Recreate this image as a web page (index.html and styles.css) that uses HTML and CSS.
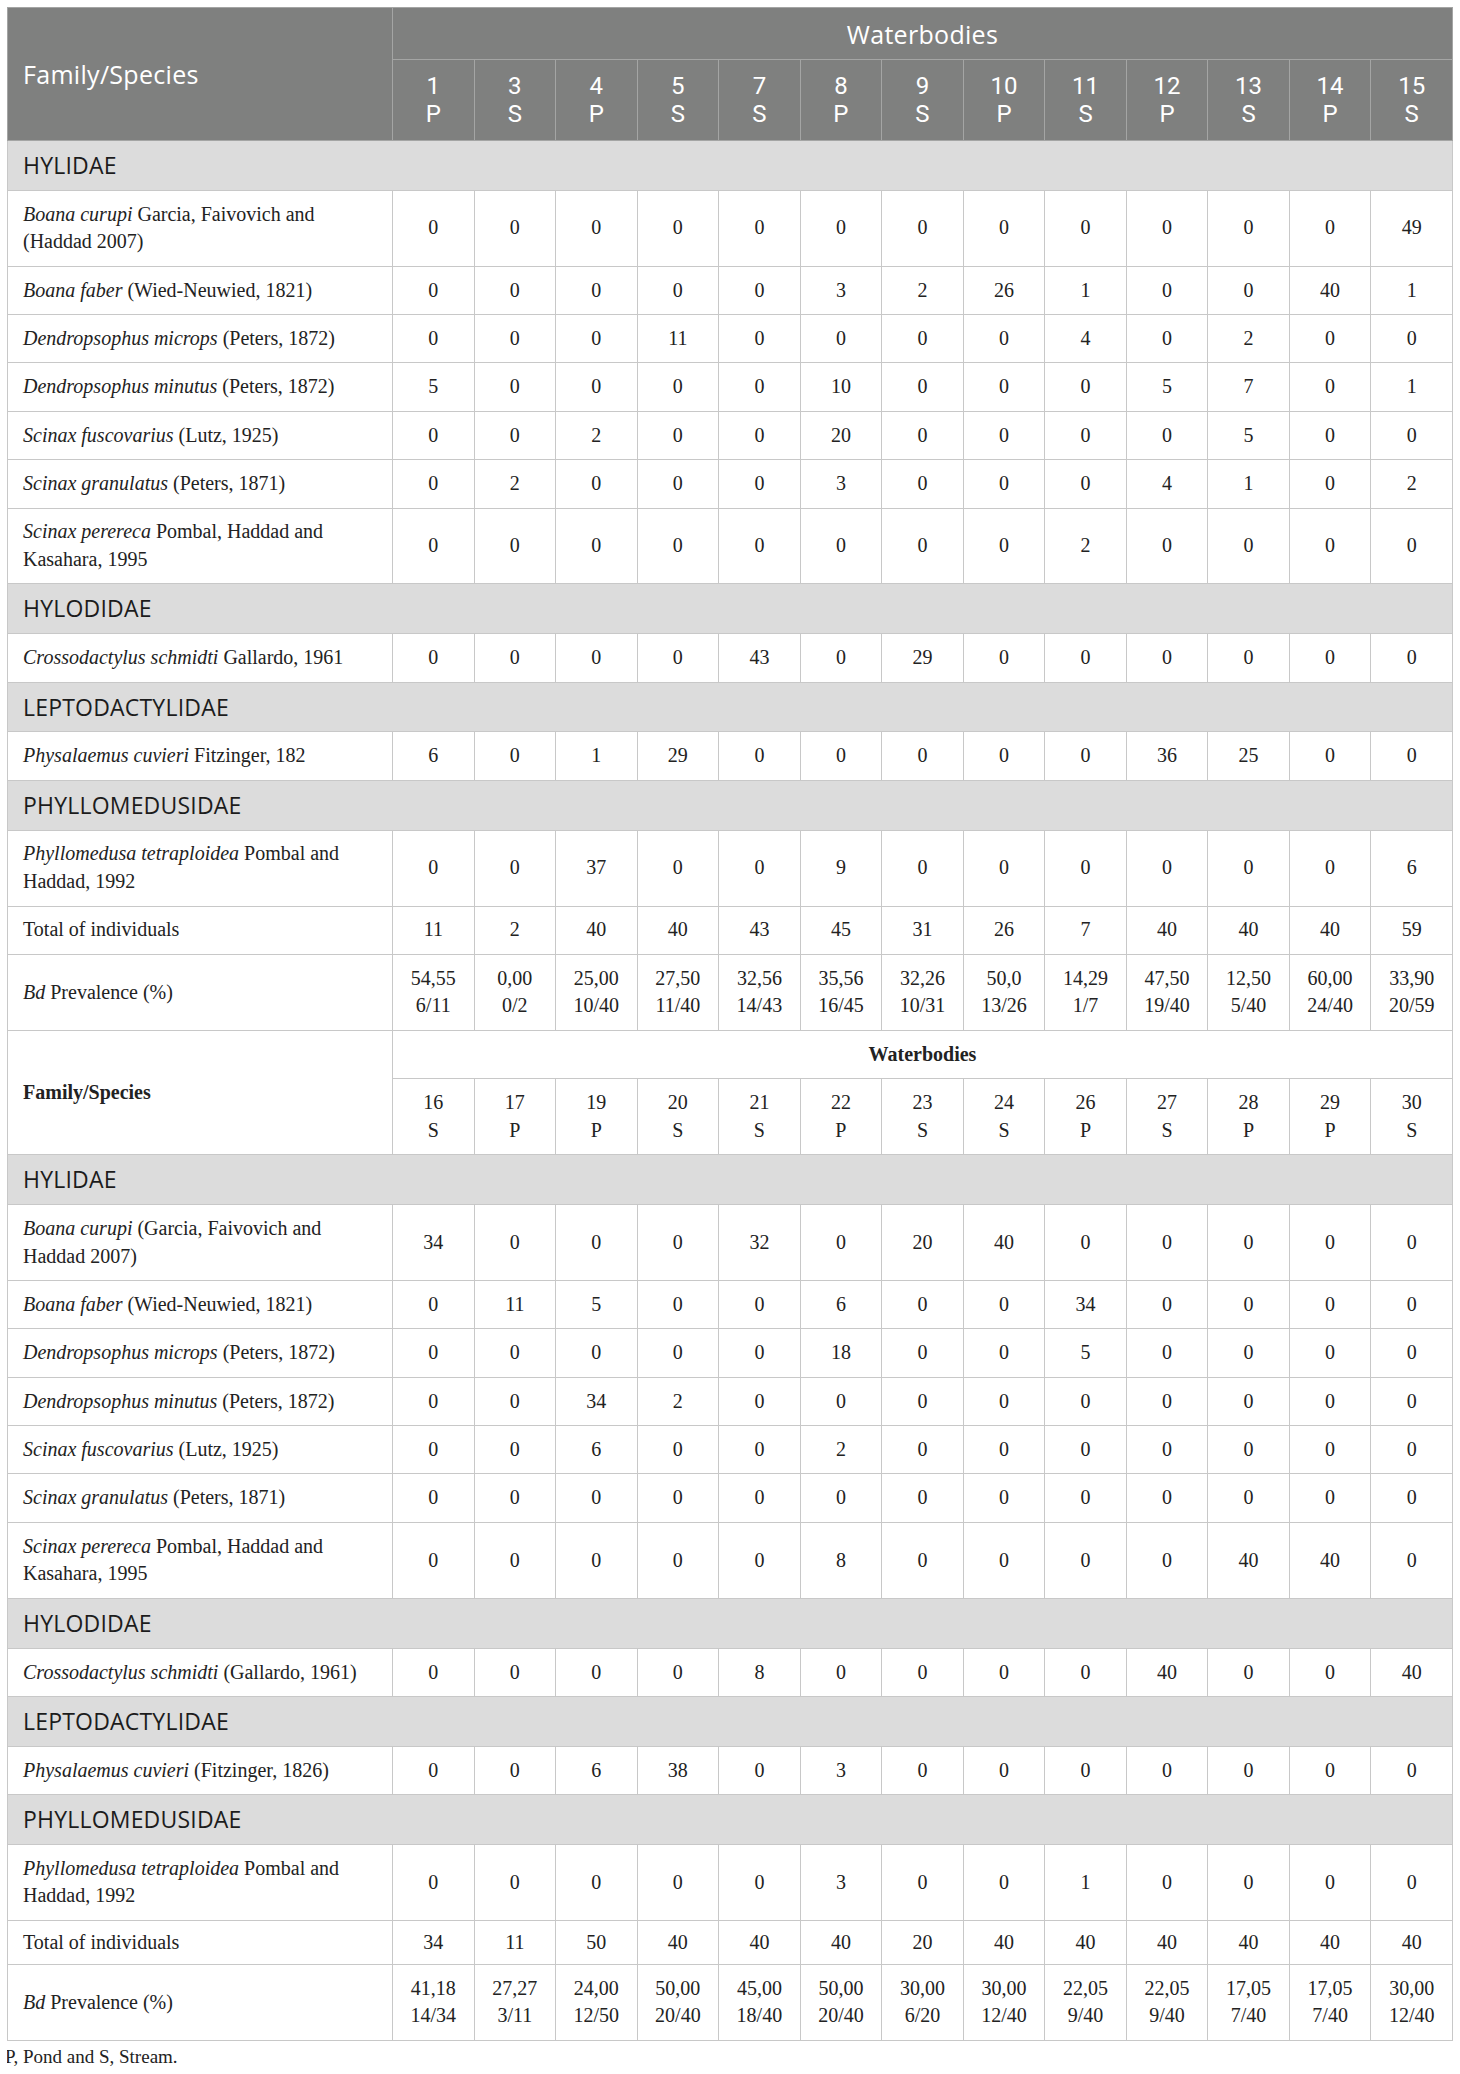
FILE: index.html
```html
<!DOCTYPE html>
<html lang="en">
<head>
<meta charset="utf-8">
<title>Waterbodies</title>
<link rel="stylesheet" href="styles.css">
</head>
<body>
<table class="tbl">
  <colgroup>
    <col class="col-name">
    <col span="13">
  </colgroup>
  <thead class="hd">
    <tr>
      <th class="name" rowspan="2">Family/Species</th>
      <th colspan="13">Waterbodies</th>
    </tr>
    <tr class="nums">
      <th>1<br>P</th><th>3<br>S</th><th>4<br>P</th><th>5<br>S</th><th>7<br>S</th><th>8<br>P</th><th>9<br>S</th><th>10<br>P</th><th>11<br>S</th><th>12<br>P</th><th>13<br>S</th><th>14<br>P</th><th>15<br>S</th>
    </tr>
  </thead>
  <tbody>
    <tr class="fam"><td colspan="14">HYLIDAE</td></tr>
    <tr><td class="sp"><i>Boana curupi</i> Garcia, Faivovich and<br>(Haddad 2007)</td><td>0</td><td>0</td><td>0</td><td>0</td><td>0</td><td>0</td><td>0</td><td>0</td><td>0</td><td>0</td><td>0</td><td>0</td><td>49</td></tr>
    <tr><td class="sp"><i>Boana faber</i> (Wied-Neuwied, 1821)</td><td>0</td><td>0</td><td>0</td><td>0</td><td>0</td><td>3</td><td>2</td><td>26</td><td>1</td><td>0</td><td>0</td><td>40</td><td>1</td></tr>
    <tr><td class="sp"><i>Dendropsophus microps</i> (Peters, 1872)</td><td>0</td><td>0</td><td>0</td><td>11</td><td>0</td><td>0</td><td>0</td><td>0</td><td>4</td><td>0</td><td>2</td><td>0</td><td>0</td></tr>
    <tr><td class="sp"><i>Dendropsophus minutus</i> (Peters, 1872)</td><td>5</td><td>0</td><td>0</td><td>0</td><td>0</td><td>10</td><td>0</td><td>0</td><td>0</td><td>5</td><td>7</td><td>0</td><td>1</td></tr>
    <tr><td class="sp"><i>Scinax fuscovarius</i> (Lutz, 1925)</td><td>0</td><td>0</td><td>2</td><td>0</td><td>0</td><td>20</td><td>0</td><td>0</td><td>0</td><td>0</td><td>5</td><td>0</td><td>0</td></tr>
    <tr><td class="sp"><i>Scinax granulatus</i> (Peters, 1871)</td><td>0</td><td>2</td><td>0</td><td>0</td><td>0</td><td>3</td><td>0</td><td>0</td><td>0</td><td>4</td><td>1</td><td>0</td><td>2</td></tr>
    <tr><td class="sp"><i>Scinax perereca</i> Pombal, Haddad and<br>Kasahara, 1995</td><td>0</td><td>0</td><td>0</td><td>0</td><td>0</td><td>0</td><td>0</td><td>0</td><td>2</td><td>0</td><td>0</td><td>0</td><td>0</td></tr>
    <tr class="fam"><td colspan="14">HYLODIDAE</td></tr>
    <tr><td class="sp"><i>Crossodactylus schmidti</i> Gallardo, 1961</td><td>0</td><td>0</td><td>0</td><td>0</td><td>43</td><td>0</td><td>29</td><td>0</td><td>0</td><td>0</td><td>0</td><td>0</td><td>0</td></tr>
    <tr class="fam"><td colspan="14">LEPTODACTYLIDAE</td></tr>
    <tr><td class="sp"><i>Physalaemus cuvieri</i> Fitzinger, 182</td><td>6</td><td>0</td><td>1</td><td>29</td><td>0</td><td>0</td><td>0</td><td>0</td><td>0</td><td>36</td><td>25</td><td>0</td><td>0</td></tr>
    <tr class="fam"><td colspan="14">PHYLLOMEDUSIDAE</td></tr>
    <tr><td class="sp"><i>Phyllomedusa tetraploidea</i> Pombal and<br>Haddad, 1992</td><td>0</td><td>0</td><td>37</td><td>0</td><td>0</td><td>9</td><td>0</td><td>0</td><td>0</td><td>0</td><td>0</td><td>0</td><td>6</td></tr>
    <tr><td class="sp">Total of individuals</td><td>11</td><td>2</td><td>40</td><td>40</td><td>43</td><td>45</td><td>31</td><td>26</td><td>7</td><td>40</td><td>40</td><td>40</td><td>59</td></tr>
    <tr><td class="sp"><i>Bd</i> Prevalence (%)</td><td>54,55<br>6/11</td><td>0,00<br>0/2</td><td>25,00<br>10/40</td><td>27,50<br>11/40</td><td>32,56<br>14/43</td><td>35,56<br>16/45</td><td>32,26<br>10/31</td><td>50,0<br>13/26</td><td>14,29<br>1/7</td><td>47,50<br>19/40</td><td>12,50<br>5/40</td><td>60,00<br>24/40</td><td>33,90<br>20/59</td></tr>
  </tbody>
  <tbody class="sub">
    <tr>
      <th class="name" rowspan="2">Family/Species</th>
      <th colspan="13">Waterbodies</th>
    </tr>
    <tr>
      <td>16<br>S</td><td>17<br>P</td><td>19<br>P</td><td>20<br>S</td><td>21<br>S</td><td>22<br>P</td><td>23<br>S</td><td>24<br>S</td><td>26<br>P</td><td>27<br>S</td><td>28<br>P</td><td>29<br>P</td><td>30<br>S</td>
    </tr>
  </tbody>
  <tbody>
    <tr class="fam"><td colspan="14">HYLIDAE</td></tr>
    <tr><td class="sp"><i>Boana curupi</i> (Garcia, Faivovich and<br>Haddad 2007)</td><td>34</td><td>0</td><td>0</td><td>0</td><td>32</td><td>0</td><td>20</td><td>40</td><td>0</td><td>0</td><td>0</td><td>0</td><td>0</td></tr>
    <tr><td class="sp"><i>Boana faber</i> (Wied-Neuwied, 1821)</td><td>0</td><td>11</td><td>5</td><td>0</td><td>0</td><td>6</td><td>0</td><td>0</td><td>34</td><td>0</td><td>0</td><td>0</td><td>0</td></tr>
    <tr><td class="sp"><i>Dendropsophus microps</i> (Peters, 1872)</td><td>0</td><td>0</td><td>0</td><td>0</td><td>0</td><td>18</td><td>0</td><td>0</td><td>5</td><td>0</td><td>0</td><td>0</td><td>0</td></tr>
    <tr><td class="sp"><i>Dendropsophus minutus</i> (Peters, 1872)</td><td>0</td><td>0</td><td>34</td><td>2</td><td>0</td><td>0</td><td>0</td><td>0</td><td>0</td><td>0</td><td>0</td><td>0</td><td>0</td></tr>
    <tr><td class="sp"><i>Scinax fuscovarius</i> (Lutz, 1925)</td><td>0</td><td>0</td><td>6</td><td>0</td><td>0</td><td>2</td><td>0</td><td>0</td><td>0</td><td>0</td><td>0</td><td>0</td><td>0</td></tr>
    <tr><td class="sp"><i>Scinax granulatus</i> (Peters, 1871)</td><td>0</td><td>0</td><td>0</td><td>0</td><td>0</td><td>0</td><td>0</td><td>0</td><td>0</td><td>0</td><td>0</td><td>0</td><td>0</td></tr>
    <tr><td class="sp"><i>Scinax perereca</i> Pombal, Haddad and<br>Kasahara, 1995</td><td>0</td><td>0</td><td>0</td><td>0</td><td>0</td><td>8</td><td>0</td><td>0</td><td>0</td><td>0</td><td>40</td><td>40</td><td>0</td></tr>
    <tr class="fam"><td colspan="14">HYLODIDAE</td></tr>
    <tr><td class="sp"><i>Crossodactylus schmidti</i> (Gallardo, 1961)</td><td>0</td><td>0</td><td>0</td><td>0</td><td>8</td><td>0</td><td>0</td><td>0</td><td>0</td><td>40</td><td>0</td><td>0</td><td>40</td></tr>
    <tr class="fam"><td colspan="14">LEPTODACTYLIDAE</td></tr>
    <tr><td class="sp"><i>Physalaemus cuvieri</i> (Fitzinger, 1826)</td><td>0</td><td>0</td><td>6</td><td>38</td><td>0</td><td>3</td><td>0</td><td>0</td><td>0</td><td>0</td><td>0</td><td>0</td><td>0</td></tr>
    <tr class="fam"><td colspan="14">PHYLLOMEDUSIDAE</td></tr>
    <tr><td class="sp"><i>Phyllomedusa tetraploidea</i> Pombal and<br>Haddad, 1992</td><td>0</td><td>0</td><td>0</td><td>0</td><td>0</td><td>3</td><td>0</td><td>0</td><td>1</td><td>0</td><td>0</td><td>0</td><td>0</td></tr>
    <tr class="short"><td class="sp">Total of individuals</td><td>34</td><td>11</td><td>50</td><td>40</td><td>40</td><td>40</td><td>20</td><td>40</td><td>40</td><td>40</td><td>40</td><td>40</td><td>40</td></tr>
    <tr><td class="sp"><i>Bd</i> Prevalence (%)</td><td>41,18<br>14/34</td><td>27,27<br>3/11</td><td>24,00<br>12/50</td><td>50,00<br>20/40</td><td>45,00<br>18/40</td><td>50,00<br>20/40</td><td>30,00<br>6/20</td><td>30,00<br>12/40</td><td>22,05<br>9/40</td><td>22,05<br>9/40</td><td>17,05<br>7/40</td><td>17,05<br>7/40</td><td>30,00<br>12/40</td></tr>
  </tbody>
</table>
<p class="note">P, Pond and S, Stream.</p>
</body>
</html>
```

FILE: styles.css
```css
html, body {
  background: #ffffff;
}

body {
  margin: 7px;
  font-family: "Liberation Serif", "Times New Roman", serif;
  color: #222222;
}

.tbl {
  width: 1446px;
  border-collapse: collapse;
  table-layout: fixed;
}

.col-name {
  width: 385px;
}

.tbl td,
.tbl th {
  border: 1px solid #c8c8c8;
  font-size: 20px;
  line-height: 27.6px;
  padding: 9.9px 2px;
  text-align: center;
  vertical-align: middle;
  font-weight: 400;
}

.hd th {
  background: #7f807f;
  color: #ffffff;
  border-color: #a4a5a4;
  font-family: "Open Sans", "Noto Sans", sans-serif;
  font-size: 25px;
  letter-spacing: 0.3px;
  line-height: 28.3px;
  padding: 11.5px 2px;
}

.hd .nums th {
  font-family: Roboto, "Open Sans", sans-serif;
  font-size: 24px;
  letter-spacing: 0;
}

.hd th.name,
.sub th.name {
  text-align: left;
  padding-left: 15px;
}

.tbl td.sp {
  text-align: left;
  padding-left: 15px;
  padding-right: 15px;
}

.fam td {
  background: #dcdcdc;
  color: #1c1c1c;
  font-family: "Open Sans", "Noto Sans", sans-serif;
  font-size: 23px;
  letter-spacing: 0.2px;
  line-height: 29px;
  text-align: left;
  padding: 9.9px 15px;
}

.sub th {
  font-weight: 700;
  background: #ffffff;
}

.short td {
  padding-top: 7.7px;
  padding-bottom: 7.7px;
}

.note {
  margin: 4px 0 0 -2px;
  font-size: 19px;
  line-height: 24px;
  color: #222222;
}
```
